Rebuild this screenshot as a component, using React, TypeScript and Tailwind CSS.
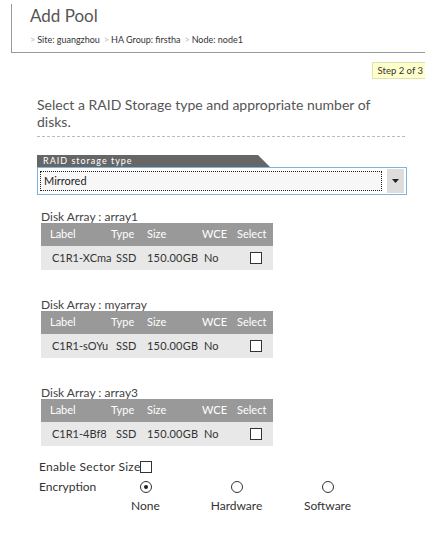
import React from 'react';

const disks = [
  { array: 'array1', label: 'C1R1-XCma' },
  { array: 'myarray', label: 'C1R1-sOYu' },
  { array: 'array3', label: 'C1R1-4Bf8' },
];

function DiskTable({ array, label }: { array: string; label: string }) {
  return (
    <div className="ml-[41px] w-[232px]">
      <p className="text-[12px] leading-[13px] text-[#444] h-[13px]">Disk Array : {array}</p>
      <div className="grid grid-cols-[66px_36px_55px_34px_41px] h-[23px] items-center bg-[#999999] text-white text-[11px]">
        <span className="pl-[9px]">Label</span>
        <span className="pl-[4px]">Type</span>
        <span className="pl-[4px]">Size</span>
        <span className="pl-[4px]">WCE</span>
        <span className="pl-[5px]">Select</span>
      </div>
      <div className="grid grid-cols-[66px_36px_55px_34px_41px] h-[24px] items-center bg-[#e8e8e8] text-[#333] text-[11px]">
        <span className="pl-[11px] whitespace-nowrap">{label}</span>
        <span className="pl-[9px]">SSD</span>
        <span className="pl-[4px] tracking-[0.2px]">150.00GB</span>
        <span className="pl-[6px]">No</span>
        <span className="pl-[18px]">
          <div className="w-[12px] h-[12px] border border-[#333] bg-white" />
        </span>
      </div>
    </div>
  );
}

function Radio({ checked, label }: { checked?: boolean; label: string }) {
  return (
    <div className="w-[91px] flex flex-col items-center">
      <div className="w-[12px] h-[12px] rounded-full border border-[#333] bg-white flex items-center justify-center">
        {checked && <div className="w-[4px] h-[4px] rounded-full bg-[#222]" />}
      </div>
      <span className="mt-[4px] text-[12px] text-[#333]">{label}</span>
    </div>
  );
}

export default function App() {
  return (
    <div className="w-[425px] h-[535px] bg-white overflow-hidden font-['Lato',sans-serif] text-[#444]">
      <header className="ml-[11px] mt-[4px] h-[49px] border-l border-b border-[#999] pl-[18px]">
        <h1 className="text-[17px] leading-[22px] text-[#555] pt-[1px]">Add Pool</h1>
        <p className="mt-[6px] text-[9px] text-[#333] flex gap-[2px] whitespace-nowrap">
          <span className="text-[#bbb]">&gt;</span> Site: guangzhou
          <span className="text-[#bbb] ml-[2px]">&gt;</span> HA Group: firstha
          <span className="text-[#bbb] ml-[2px]">&gt;</span> Node: node1
        </p>
      </header>

      <div className="flex justify-end mt-[9px] overflow-hidden">
        <div className="shrink-0 mr-[-4px] bg-[#ffffcc] border border-[#e0e0b0] px-[5px] h-[17px] leading-[15px] text-[9.5px] text-[#333] whitespace-nowrap">Step 2 of 3</div>
      </div>

      <p className="ml-[37px] mr-[20px] mt-[17px] text-[14px] leading-[17px] text-[#555]">
        Select a RAID Storage type and appropriate number of disks.
      </p>
      <div className="ml-[37px] w-[368px] mt-[6px] border-t border-dashed border-[#bbb]" />

      <div className="ml-[37px] mt-[18px] w-[370px]">
        <div className="h-[12px] w-[233px] bg-[#666] text-white text-[9px] tracking-[1px] leading-[12px] pl-[6px] [clip-path:polygon(0_0,221px_0,233px_100%,0_100%)]">
          RAID storage type
        </div>
        <div className="h-[28px] border border-[#7fb5dd] bg-white flex items-center px-[2px]">
          <div className="flex-1 h-[20px] border border-dotted border-[#222] bg-[#f7f7f7] text-[11px] text-[#222] leading-[18px] pl-[3px]">Mirrored</div>
          <div className="ml-[5px] w-[17px] h-[24px] bg-[#ddd] flex items-center justify-center">
            <svg width="7" height="4" viewBox="0 0 7 4"><path d="M0 0h7L3.5 4z" fill="#222" /></svg>
          </div>
        </div>
      </div>

      <div className="mt-[15px] flex flex-col gap-[28px]">
        {disks.map(d => <DiskTable key={d.array} {...d} />)}
      </div>

      <div className="ml-[39px] mt-[12px] flex items-center text-[12px] text-[#333]">
        <span className="w-[101px] tracking-[0.3px] whitespace-nowrap">Enable Sector Size</span>
        <div className="w-[12px] h-[12px] border border-[#333] bg-white" />
      </div>
      <div className="ml-[39px] mt-[2px] flex text-[12px] text-[#333]">
        <span className="w-[61px]">Encryption</span>
        <div className="flex mt-[3px]">
          <Radio checked label="None" />
          <Radio label="Hardware" />
          <Radio label="Software" />
        </div>
      </div>
    </div>
  );
}
